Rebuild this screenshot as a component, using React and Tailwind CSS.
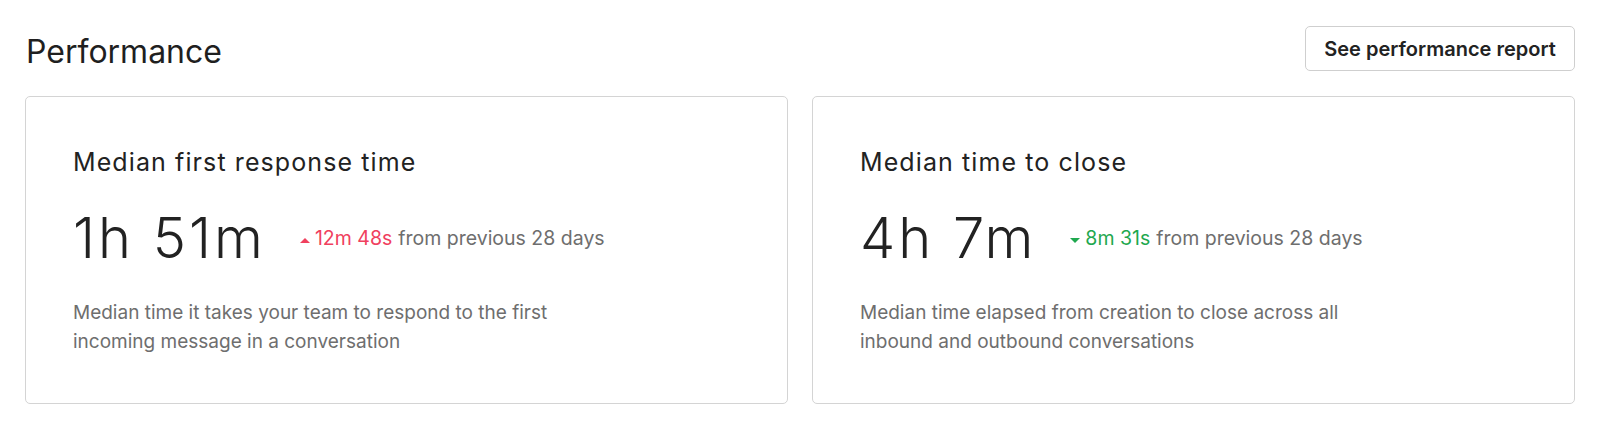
import React from "react";

const font = { fontFamily: "Inter, 'Liberation Sans', sans-serif" };

function MetricCard({ title, value, delta, up, description }) {
    return (
        <div className="flex-1 h-[308px] rounded-[5px] border border-[#d4d4d4] bg-white px-[47px] pt-[50px]">
            <h2 className="text-[25px] leading-[30px] tracking-[1.1px] text-[#222]">{title}</h2>
            <div className="flex items-center mt-[29px]">
                <span className="text-[56px] leading-[64px] font-light text-[#222] tracking-[3px]">{value}</span>
                <span className="flex items-center ml-[34px] text-[19.5px] leading-[29px]">
                    <svg width="10" height="5" viewBox="0 0 10 5" className="mr-[5px] mt-[4px]">
                        {up ? (
                            <path d="M5 0L10 5H0Z" fill="#f0405e" />
                        ) : (
                            <path d="M0 0H10L5 5Z" fill="#1fa84f" />
                        )}
                    </svg>
                    <span className={up ? "text-[#f0405e]" : "text-[#1fa84f]"}>{delta}</span>
                    <span className="text-[#6e6e6e] ml-[6px]">from previous 28 days</span>
                </span>
            </div>
            <p className="mt-[28px] w-[520px] text-[19px] leading-[29px] text-[#6e6e6e]">{description}</p>
        </div>
    );
}

export default function App() {
    return (
        <div className="w-[1600px] h-[422px] bg-white px-[25px] pt-[26px]" style={font}>
            <div className="flex items-start justify-between h-[45px]">
                <h1 className="text-[32px] leading-[38px] pt-[7px] text-[#1f1f1f] pl-[1px]">Performance</h1>
                <button className="h-[45px] w-[270px] rounded-[5px] border border-[#cfcfcf] bg-white text-[20px] font-semibold text-[#222]">
                    See performance report
                </button>
            </div>
            <div className="flex gap-[24px] mt-[25px]">
                <MetricCard
                    title="Median first response time"
                    value="1h 51m"
                    delta="12m 48s"
                    up
                    description="Median time it takes your team to respond to the first incoming message in a conversation"
                />
                <MetricCard
                    title="Median time to close"
                    value="4h 7m"
                    delta="8m 31s"
                    description="Median time elapsed from creation to close across all inbound and outbound conversations"
                />
            </div>
        </div>
    );
}
